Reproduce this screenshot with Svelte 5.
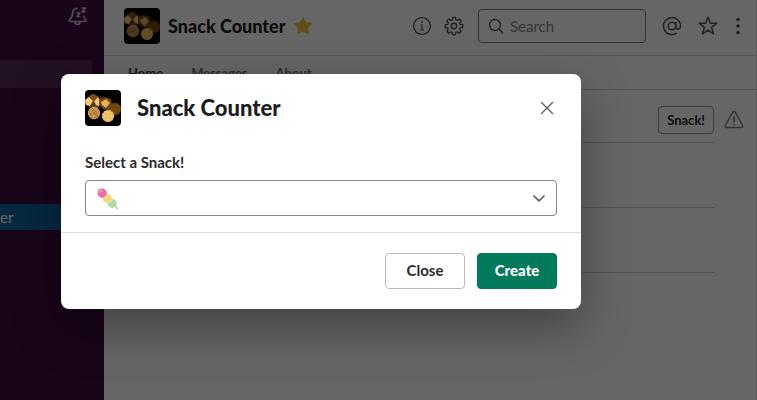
<script>
  let snack = $state('dango');
  const tabs = ['Home', 'Messages', 'About'];
</script>

{#snippet cookies()}
  <svg class="app-icon" viewBox="0 0 36 36" aria-hidden="true">
    <rect width="36" height="36" fill="#050302" />
    <path d="M0 10l4-4 4-2 7 3 1 7-3 4-5 0-4-1-4-3z" fill="#5f3b12" />
    <path d="M0 10l4-3 4 4-3 5-4-1zM9 11l4-4 2 5-1 4-3-1z" fill="#f0c878" />
    <path d="M5 5l4-1 4 3-4 4-4-3z" fill="#7c501c" />
    <path d="M15 8l5-1 6 2 1 6-3 5-6-1-4-5z" fill="#6a4215" />
    <path d="M16 12l5-3 4 4-4 5-4-3z" fill="#e5b055" />
    <circle cx="30" cy="19" r="6" fill="#70480f" stroke="#593808" stroke-dasharray="2 1" />
    <circle cx="9" cy="23" r="5.500" fill="#a86e28" stroke="#d9a95a" stroke-width="1.300" />
    <path d="M5.500 23a3.500 3.500 0 0 1 7-1c0 4-5.500 4.500-5.500 1 0-2.500 3.500-2.500 3.500 0M6 26l4 .5" fill="none" stroke="#dcb064" stroke-width="1" />
    <circle cx="23" cy="26" r="5.800" fill="#efc56b" />
    <circle cx="23" cy="26" r="5.600" fill="none" stroke="#e6b65d" stroke-width="1.200" stroke-dasharray="2 1" />
    <path d="M21 24h.1M25 24h.1M21 28h.1M25 28h.1" stroke="#b98a3c" stroke-width="1.200" stroke-linecap="round" />
  </svg>
{/snippet}

<div class="app">
  <aside class="sidebar">
    <div class="side-top">
      <button class="icon-button bell" aria-label="Notifications paused">
        <svg width="20" height="20" viewBox="0 0 20 20" fill="none" stroke="currentColor" stroke-width="1.600" stroke-linecap="round" stroke-linejoin="round">
          <path d="M9 2.200C5.500 2.700 4.500 5.200 4.500 8c0 3-1 4-3 5.500C1 14.500 1.500 15.500 3 15.500h13c1.800 0 2-1.200 1.500-2-1-.8-1.500-1.500-1.500-3.500M7 16c0 3.300 5 3.300 5 0" />
          <path d="M9 7h3l-3 3.500h3M14 2h3.500L14 5.800h3.500" stroke-width="1.500" />
        </svg>
      </button>
    </div>
    <div class="side-card"></div>
    <a class="side-active" href="#app">er</a>
  </aside>

  <main class="main">
    <header class="topbar">
      {@render cookies()}
      <h1>Snack Counter</h1>
      <svg class="gold" width="20" height="20" viewBox="0 0 20 20" aria-label="Starred">
        <path d="M10 1.800l2.500 5.200 5.700.7-4.200 4 1.100 5.700L10 14.700l-5.100 2.700L6 11.700l-4.200-4 5.700-.7z" fill="#f5bd3d" stroke="#f5bd3d" stroke-width="1.500" stroke-linejoin="round" />
      </svg>
      <div class="tools">
        <button class="icon-button" aria-label="Details">
          <svg width="20" height="20" viewBox="0 0 20 20" fill="none" stroke="currentColor" stroke-width="1.400" stroke-linecap="round">
            <circle cx="10" cy="10" r="8.400" /><path d="M9 9h1v5M8.500 14h3" stroke-width="1.200" /><circle cx="10" cy="6" r=".3" fill="currentColor" />
          </svg>
        </button>
        <button class="icon-button" aria-label="Settings">
          <svg width="20" height="20" viewBox="0 0 20 20" fill="none" stroke="currentColor" stroke-width="1.400" stroke-linejoin="round">
            <path d="M8.600 1.500h2.800l.5 2.400 1.300.5 2-1.300 1.900 1.900-1.300 2 .5 1.400 2.400.4v2.700l-2.400.5-.5 1.300 1.300 2-1.900 1.900-2-1.300-1.300.5-.5 2.300H8.600l-.5-2.300-1.300-.5-2 1.300-1.900-1.900 1.300-2-.5-1.300-2.400-.5V8.800l2.400-.4.5-1.400-1.300-2 1.900-1.900 2 1.300 1.300-.5z" />
            <circle cx="10" cy="10" r="2.700" />
          </svg>
        </button>
        <label class="search">
          <svg width="16" height="16" viewBox="0 0 16 16" fill="none" stroke="currentColor" stroke-width="1.400" stroke-linecap="round">
            <circle cx="7" cy="7" r="5.500" /><path d="M11 11l3.700 3.700" />
          </svg>
          <input type="text" placeholder="Search" aria-label="Search" />
        </label>
        <button class="icon-button" aria-label="Mentions">
          <svg width="20" height="20" viewBox="0 0 20 20" fill="none" stroke="currentColor" stroke-width="1.500" stroke-linecap="round">
            <circle cx="10" cy="10" r="3.800" /><path d="M13.800 6.500V11c0 3 4.700 3 4.700-1a8.500 8.500 0 1 0-4.300 7.400" />
          </svg>
        </button>
        <button class="icon-button star" aria-label="Star">
          <svg width="20" height="20" viewBox="0 0 20 20" fill="none" stroke="currentColor" stroke-width="1.500" stroke-linejoin="round">
            <path d="M10 1.300l2.300 6h6.300l-5 4 1.900 6.700L10 14.200 4.500 18l1.900-6.700-5-4h6.300z" />
          </svg>
        </button>
        <button class="icon-button more" aria-label="More">
          <svg width="20" height="20" viewBox="0 0 20 20" fill="currentColor">
            <circle cx="10" cy="3.500" r="1.800" /><circle cx="10" cy="10" r="1.800" /><circle cx="10" cy="16.500" r="1.800" />
          </svg>
        </button>
      </div>
    </header>

    <nav class="tabs">
      {#each tabs as tab, i}
        <a href="#app" class:current={i === 0}>{tab}</a>
      {/each}
    </nav>

    <section class="rows">
      <div class="row first">
        <div class="line">
          <button class="snack">Snack!</button>
        </div>
        <svg class="warn" width="20" height="20" viewBox="0 0 20 20" fill="none" stroke="currentColor" stroke-width="1.500" stroke-linejoin="round" stroke-linecap="round" aria-label="Warning">
          <path d="M8.800 2.200a1.400 1.400 0 0 1 2.400 0l7.500 13.300c.5 1-.1 2-1.200 2h-15c-1.100 0-1.700-1-1.200-2z" />
          <path d="M10 7v4.500M10 14.300v.1" stroke-width="1.800" />
        </svg>
      </div>
      <div class="row"></div>
      <div class="row"></div>
    </section>
  </main>

  <div class="overlay">
    <form class="modal" role="dialog" aria-labelledby="dialog-title" onsubmit={(e) => e.preventDefault()}>
      <header class="modal-head">
        {@render cookies()}
        <h2 id="dialog-title">Snack Counter</h2>
        <button type="button" class="icon-button dismiss" aria-label="Dismiss">
          <svg width="20" height="20" viewBox="0 0 20 20" fill="none" stroke="currentColor" stroke-width="1.400" stroke-linecap="round">
            <path d="M4.500 4.500l11 11M15.500 4.500l-11 11" />
          </svg>
        </button>
      </header>
      <div class="modal-body">
        <label for="snack">Select a Snack!</label>
        <div class="select-wrap">
          <select id="snack" bind:value={snack}>
            <option value="dango"></option>
          </select>
          <svg class="dango" width="22" height="22" viewBox="0 0 22 22" aria-hidden="true">
            <path d="M.7.900l20 19.800" stroke="#d9bd82" stroke-width="1.300" stroke-linecap="round" />
            <circle cx="15.200" cy="15.400" r="4.500" fill="#aedba0" />
            <circle cx="10.200" cy="10.300" r="4.500" fill="#f9da72" />
            <circle cx="5.200" cy="5.200" r="4.600" fill="#e86fa4" />
            <path d="M2.700 4.200c.5-1.200 1.300-1.700 2.300-1.700M8 9c.5-1 1.200-1.300 2-1.300M13 14c.5-1 1.200-1.300 2-1.300" fill="none" stroke="#fff" stroke-opacity=".5" stroke-width="1.200" stroke-linecap="round" />
          </svg>
          <svg class="chevron" width="20" height="20" viewBox="0 0 20 20" fill="none" stroke="#616061" stroke-width="1.700" stroke-linecap="round" stroke-linejoin="round" aria-hidden="true">
            <path d="M5 8l5 4.800L15 8" />
          </svg>
        </div>
      </div>
      <footer class="modal-foot">
        <button type="button" class="button">Close</button>
        <button type="submit" class="button primary">Create</button>
      </footer>
    </form>
  </div>
</div>

<style>
  :global(body) {
    margin: 0;
  }
  .app,
  .app * {
    box-sizing: border-box;
  }
  .app {
    position: relative;
    display: flex;
    min-height: 100vh;
    overflow: hidden;
    background: #fff;
    color: #1d1c1d;
    font-family: Lato, sans-serif;
    font-size: 15px;
    line-height: 20px;
  }
  button,
  input,
  select {
    font: inherit;
    color: inherit;
  }
  a {
    text-decoration: none;
  }
  svg {
    display: block;
    flex: none;
  }
  .icon-button {
    flex: none;
    padding: 0;
    border: 0;
    background: none;
    color: inherit;
  }
  .app-icon {
    width: 36px;
    height: 36px;
    border-radius: 4px;
  }
  .sidebar {
    flex: none;
    width: 104px;
    background: #3f0e40;
    color: #cfc3cf;
  }
  .side-top {
    display: flex;
    justify-content: flex-end;
    height: 60px;
    padding: 6px 16px;
  }
  .bell {
    align-self: flex-start;
  }
  .side-card {
    height: 28px;
    margin-right: 12px;
    border-radius: 0 4px 4px 0;
    background: #562a57;
  }
  .side-active {
    display: block;
    height: 26px;
    margin-top: 116px;
    background: #1164a3;
    color: #fff;
    line-height: 26px;
  }
  .main {
    flex: 1;
    min-width: 0;
    border-right: 1px solid #ddd;
  }
  .topbar {
    display: flex;
    align-items: center;
    height: 56px;
    padding: 0 8px 4px 20px;
    border-bottom: 1px solid #ccc;
  }
  h1 {
    margin: 0 8px;
    font-size: 18px;
    font-weight: 900;
    line-height: 24px;
    white-space: nowrap;
  }
  .tools {
    display: flex;
    align-items: center;
    gap: 12px;
    margin-left: auto;
    color: #555;
  }
  .search {
    display: flex;
    align-items: center;
    gap: 6px;
    width: 168px;
    height: 34px;
    padding: 0 9px;
    margin-right: 4px;
    margin-left: 2px;
    border: 1px solid #868686;
    border-radius: 4px;
  }
  .search input {
    width: 100%;
    min-width: 0;
    padding: 0;
    border: 0;
    outline: 0;
    background: none;
  }
  .search input::placeholder {
    color: #868686;
    opacity: 1;
  }
  .star {
    margin-left: 4px;
  }
  .more {
    margin-left: -2px;
  }
  .tabs {
    display: flex;
    gap: 28px;
    height: 34px;
    padding: 7px 24px 0;
    border-bottom: 1px solid #ccc;
    font-size: 13px;
    font-weight: 700;
  }
  .tabs a {
    color: #717071;
  }
  .tabs a.current {
    color: #3d3c3d;
  }
  .rows {
    padding: 0 42px 0 24px;
  }
  .row {
    height: 65px;
    border-bottom: 1px solid #ccc;
  }
  .first {
    display: flex;
    align-items: center;
    height: 53px;
    padding-top: 8px;
  }
  .line {
    display: flex;
    flex: 1;
    justify-content: flex-end;
  }
  .snack {
    height: 28px;
    padding: 0 8px;
    border: 1px solid #999;
    border-radius: 4px;
    background: #fff;
    font-size: 13px;
    font-weight: 700;
  }
  .warn {
    margin-right: -30px;
    margin-left: 10px;
    color: #868686;
  }
  .overlay {
    position: absolute;
    inset: 0;
    display: flex;
    align-items: flex-start;
    padding: 74px 176px 16px 61px;
    background: rgba(0, 0, 0, 0.6);
  }
  .modal {
    flex: 1;
    min-width: 0;
    border-radius: 8px;
    background: #fff;
    box-shadow: 0 18px 48px rgba(0, 0, 0, 0.35);
  }
  .modal-head {
    display: flex;
    align-items: center;
    gap: 16px;
    padding: 16px 24px;
  }
  h2 {
    margin: 0;
    font-size: 22px;
    font-weight: 900;
    line-height: 30px;
  }
  .dismiss {
    margin-left: auto;
    color: #616061;
  }
  .modal-body {
    padding: 10px 24px 16px;
    border-bottom: 1px solid #ddd;
  }
  .modal-body label {
    display: block;
    margin-bottom: 8px;
    color: #2c2b2c;
    font-weight: 700;
  }
  .select-wrap {
    position: relative;
  }
  select {
    display: block;
    width: 100%;
    height: 36px;
    padding: 0 36px 0 12px;
    border: 1px solid #868686;
    border-radius: 4px;
    appearance: none;
    background: #fff;
  }
  .dango,
  .chevron {
    position: absolute;
    top: 8px;
    pointer-events: none;
  }
  .dango {
    left: 12px;
  }
  .chevron {
    right: 8px;
  }
  .modal-foot {
    display: flex;
    justify-content: flex-end;
    gap: 12px;
    padding: 20px 24px;
  }
  .button {
    width: 80px;
    height: 36px;
    padding: 0 0 2px;
    border: 1px solid #bbb;
    border-radius: 4px;
    background: #fff;
    color: #2c2b2c;
    font-weight: 700;
  }
  .primary {
    border-color: #007a5a;
    background: #007a5a;
    color: #fff;
    font-weight: 900;
  }
</style>
